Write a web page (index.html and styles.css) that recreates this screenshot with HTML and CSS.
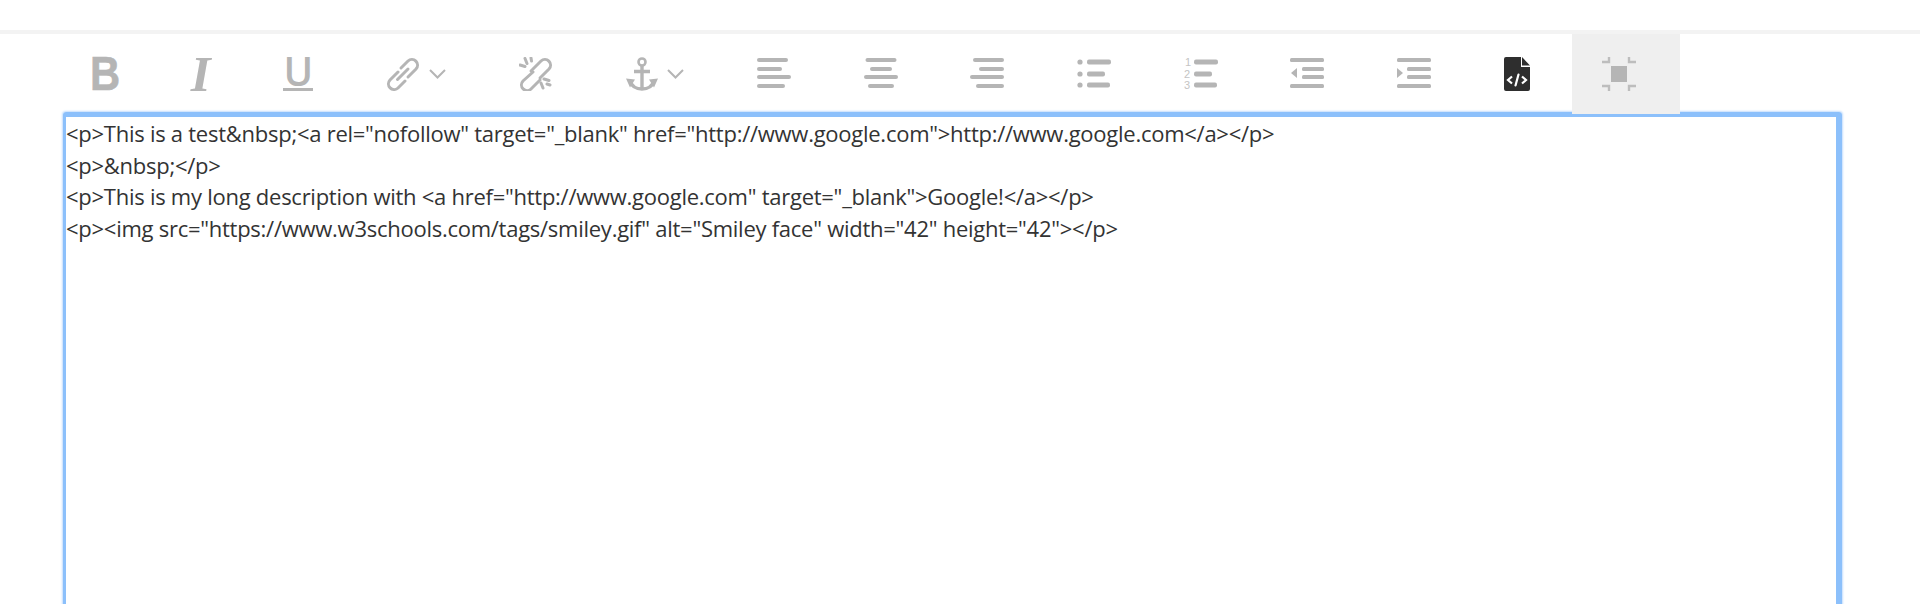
FILE: index.html
```html
<!DOCTYPE html>
<html lang="en">
<head>
<meta charset="utf-8">
<title>Editor</title>
<link rel="stylesheet" href="styles.css">
</head>
<body>
<div class="topline"></div>
<div class="toolbar">
  <div class="btn"><span class="glyph glyph-b">B</span></div>
  <div class="btn"><span class="glyph glyph-i">I</span></div>
  <div class="btn"><span class="glyph-u">U</span></div>
  <div class="btn">
    <svg class="ico" width="34" height="34" viewBox="0 0 34 34"><g fill="none" stroke="#b5b5b5" stroke-width="3" stroke-linecap="round"><path d="M15 11l7-7a5.660 5.660 0 0 1 8 8L22 20"/><path d="M12 15l-8 8a5.660 5.660 0 0 0 8 8l7-7"/><path d="M11.500 22.500L22 12"/></g></svg>
    <svg class="chev" width="17" height="10" viewBox="0 0 17 10"><path d="M1 1l7.500 7.500L16 1" fill="none" stroke="#b5b5b5" stroke-width="2"/></svg>
  </div>
  <div class="btn">
    <svg class="ico" width="34" height="34" viewBox="0 0 34 34"><g fill="none" stroke="#b5b5b5" stroke-width="3" stroke-linecap="round"><path d="M12 14L22 4a5.660 5.660 0 0 1 8 8l-9 9"/><path d="M14 15l-10 9a5.660 5.660 0 0 0 8 8l9-9"/><path d="M1 8l5 1.500M6 1.500l2 5M12 1l0.500 3M25 22l5 1.500M22 26l2 5M31 28l-3-1"/></g></svg>
  </div>
  <div class="btn">
    <svg class="ico" width="32" height="34" viewBox="0 0 32 34"><g fill="none" stroke="#b5b5b5"><circle cx="16" cy="5" r="3.500" stroke-width="2.600"/><path d="M16 8v24M8 14.500h16" stroke-width="3.400"/><path d="M4 24c2 6 7 8 12 8s10-2 12-8" stroke-width="3.400"/></g><path d="M0 21.500l9 1-5 8zM32 21.500l-9 1 5 8z" fill="#b5b5b5"/></svg>
    <svg class="chev" width="17" height="10" viewBox="0 0 17 10"><path d="M1 1l7.500 7.500L16 1" fill="none" stroke="#b5b5b5" stroke-width="2"/></svg>
  </div>
  <div class="btn">
    <svg class="ico" width="34" height="34" viewBox="0 0 34 34"><g fill="#b5b5b5"><rect y="1" width="31" height="4" rx="2"/><rect y="10" width="25" height="4" rx="2"/><rect y="18" width="34" height="4" rx="2"/><rect y="27" width="28" height="4" rx="2"/></g></svg>
  </div>
  <div class="btn">
    <svg class="ico" width="34" height="34" viewBox="0 0 34 34"><g fill="#b5b5b5"><rect x="1.500" y="1" width="31" height="4" rx="2"/><rect x="6" y="10" width="22" height="4" rx="2"/><rect y="18" width="34" height="4" rx="2"/><rect x="4" y="27" width="26" height="4" rx="2"/></g></svg>
  </div>
  <div class="btn">
    <svg class="ico" width="34" height="34" viewBox="0 0 34 34"><g fill="#b5b5b5"><rect x="3" y="1" width="31" height="4" rx="2"/><rect x="9" y="10" width="25" height="4" rx="2"/><rect y="18" width="34" height="4" rx="2"/><rect x="6" y="27" width="28" height="4" rx="2"/></g></svg>
  </div>
  <div class="btn">
    <svg class="ico" width="34" height="34" viewBox="0 0 34 34"><g fill="#b5b5b5"><circle cx="3" cy="5" r="2.600"/><circle cx="3" cy="17" r="2.600"/><circle cx="3" cy="28" r="2.600"/><rect x="10" y="2.500" width="24" height="5" rx="2"/><rect x="10" y="14.500" width="18" height="5" rx="2"/><rect x="10" y="25.500" width="23" height="5" rx="2"/></g></svg>
  </div>
  <div class="btn">
    <svg class="ico" width="34" height="34" viewBox="0 0 34 34"><g fill="#c4c4c4" font-family="Liberation Sans, sans-serif" font-size="11"><text x="1" y="9">1</text><text x="0" y="21">2</text><text x="0" y="32">3</text></g><g fill="#b5b5b5"><rect x="10" y="2.500" width="24" height="5" rx="2"/><rect x="10" y="14.500" width="18" height="5" rx="2"/><rect x="10" y="25.500" width="23" height="5" rx="2"/></g></svg>
  </div>
  <div class="btn">
    <svg class="ico" width="34" height="34" viewBox="0 0 34 34"><g fill="#b5b5b5"><rect y="1" width="34" height="4" rx="1.500"/><rect x="12" y="10" width="22" height="4" rx="1.500"/><rect x="12" y="18" width="22" height="4" rx="1.500"/><rect y="27" width="34" height="4" rx="1.500"/><path d="M7 11v10l-6-5z"/></g></svg>
  </div>
  <div class="btn">
    <svg class="ico" width="34" height="34" viewBox="0 0 34 34"><g fill="#b5b5b5"><rect y="1" width="34" height="4" rx="1.500"/><rect x="10" y="10" width="24" height="4" rx="1.500"/><rect x="10" y="18" width="24" height="4" rx="1.500"/><rect y="27" width="34" height="4" rx="1.500"/><path d="M0 11v10l6-5z"/></g></svg>
  </div>
  <div class="btn">
    <svg class="ico" width="26" height="34" viewBox="0 0 26 34"><path d="M2 0h15v10h9v22a2 2 0 0 1-2 2H2a2 2 0 0 1-2-2V2a2 2 0 0 1 2-2z" fill="#2e2e2e"/><path d="M18 0l8 8.500h-8z" fill="#2e2e2e"/><g fill="none" stroke="#fff" stroke-width="2.200"><path d="M8 19.500l-4 3.500 4 3.500M18 19.500l4 3.500-4 3.500"/><path d="M14.500 17.500l-3 11" stroke-linecap="round"/></g></svg>
  </div>
  <div class="btn btn-active">
    <svg class="ico" width="34" height="34" viewBox="0 0 34 34"><rect x="9" y="9" width="16" height="16" fill="#b5b5b5"/><g fill="none" stroke="#bdbdbd" stroke-width="2.400"><path d="M0 5h7V0M34 5h-7V0M0 29h7v5M34 29h-7v5"/></g></svg>
  </div>
</div>
<div class="editor">&lt;p&gt;This is a test&amp;nbsp;&lt;a rel="nofollow" target="_blank" href="http://www.google.com"&gt;http://www.google.com&lt;/a&gt;&lt;/p&gt;
&lt;p&gt;&amp;nbsp;&lt;/p&gt;
&lt;p&gt;This is my long description with &lt;a href="http://www.google.com" target="_blank"&gt;Google!&lt;/a&gt;&lt;/p&gt;
&lt;p&gt;&lt;img src="https://www.w3schools.com/tags/smiley.gif" alt="Smiley face" width="42" height="42"&gt;&lt;/p&gt;</div>
</body>
</html>
```
FILE: styles.css
```css
html, body {
  margin: 0;
  padding: 0;
  height: 604px;
  overflow: hidden;
  background: #fff;
}
.topline {
  margin-top: 30px;
  height: 4px;
  background: #f3f3f3;
}
.toolbar {
  display: flex;
  height: 80px;
  margin-left: 62px;
  position: relative;
  z-index: 1;
}
.btn {
  display: flex;
  align-items: center;
  gap: 9.5px;
  padding: 0 42.67px 0 30px;
  flex: none;
}
.btn-active {
  background: #efefef;
  padding-right: 44px;
}
.ico, .chev {
  display: block;
  flex: none;
}
.glyph {
  display: flex;
  justify-content: center;
  color: #b5b5b5;
  height: 34px;
}
.glyph-b {
  width: 26px;
  font: 700 47.5px/34px "Liberation Sans", sans-serif;
  transform: scaleX(0.88);
  -webkit-text-stroke: 0.6px #b5b5b5;
}
.glyph-i {
  width: 20px;
  font: italic 700 51px/34px "Liberation Serif", serif;
}
.glyph-u {
  display: block;
  width: 30px;
  height: 31px;
  border-bottom: 3px solid #b5b5b5;
  color: #b5b5b5;
  text-align: center;
  font: 600 40px/27px "Open Sans", sans-serif;
}
.editor {
  height: 600px;
  margin: -2px 78px 0 63px;
  box-sizing: border-box;
  border-style: solid;
  border-color: #8cc0fb;
  border-width: 5px 6px 5px 3px;
  border-radius: 3px;
  box-shadow: 0 0 2px 1px #c4defd;
  padding: 1px 0 0 0;
  white-space: pre;
  color: #333;
  font: 400 22px/31.6px "Open Sans", sans-serif;
  letter-spacing: -0.26px;
}
```
